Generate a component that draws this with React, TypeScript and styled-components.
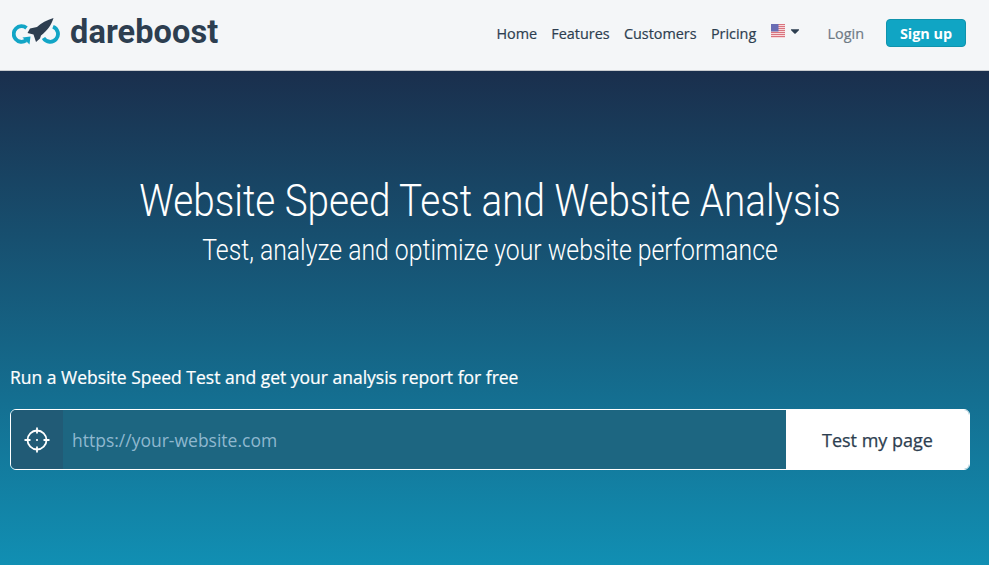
import React from 'react'
import styled, { createGlobalStyle } from 'styled-components'
import { FaCaretDown } from 'react-icons/fa'

const GlobalStyle = createGlobalStyle`
  html, body {
    margin: 0;
    padding: 0;
    background: #118fb3;
    font-family: "Open Sans", "Liberation Sans", sans-serif;
  }
  * { box-sizing: border-box; }
`

const Page = styled.div`
  width: 989px;
  height: 565px;
  overflow: hidden;
`

const Header = styled.header`
  height: 71px;
  display: flex;
  align-items: center;
  justify-content: space-between;
  padding: 0 23px 8px 12px;
  background: #f4f6f8;
  border-bottom: 1px solid #c9cccf;
`

const Brand = styled.a`
  display: flex;
  align-items: center;
  gap: 10px;
  margin-top: 2px;
`

const BrandName = styled.span`
  font-family: "Roboto", "Liberation Sans", sans-serif;
  font-size: 32.5px;
  font-weight: 700;
  line-height: 36px;
  letter-spacing: 0.1px;
  color: #2d3e50;
`

const Nav = styled.nav`
  display: flex;
  align-items: center;
  margin-top: 4px;
`

const NavLink = styled.a<{ $muted?: boolean }>`
  padding-top: 1px;
  font-size: 14.4px;
  font-weight: 400;
  line-height: 20px;
  -webkit-text-stroke: 0.2px currentColor;
  margin-right: ${(p) => (p.$muted ? '22px' : '14.3px')};
  color: ${(p) => (p.$muted ? '#6f7a85' : '#2d3e50')};
`

const LangPicker = styled.div`
  display: flex;
  align-items: center;
  gap: 3px;
  margin: -4px 26px 0 0;
  color: #2d3e50;
`

const SignUp = styled.button`
  width: 80px;
  height: 28px;
  padding: 0;
  border: 1px solid #0f93ad;
  border-radius: 4px;
  background: #10a5c4;
  color: #fff;
  font-family: inherit;
  font-size: 14.4px;
  font-weight: 700;
`

const Hero = styled.main`
  height: 494px;
  padding: 107px 19px 0 10px;
  background: linear-gradient(180deg, #1a2f4d 0%, #118fb3 100%);
`

const Title = styled.h1`
  margin: 0;
  text-align: center;
  font-family: "Roboto", "Liberation Sans", sans-serif;
  font-size: 45px;
  font-weight: 300;
  line-height: 46px;
  color: #fff;
  transform: scaleX(0.858);
`

const Subtitle = styled.h2`
  margin: 7px 0 0;
  text-align: center;
  font-family: "Roboto", "Liberation Sans", sans-serif;
  font-size: 28.8px;
  font-weight: 300;
  line-height: 38px;
  color: #fff;
  transform: scaleX(0.86);
`

const FormLabel = styled.label`
  display: block;
  margin-top: 96px;
  font-size: 17.5px;
  font-weight: 400;
  line-height: 24px;
  -webkit-text-stroke: 0.2px currentColor;
  color: #fff;
`

const TestForm = styled.form`
  display: flex;
  height: 61px;
  margin-top: 20px;
  width: 960px;
  border: 1px solid #fff;
  border-radius: 6px;
  overflow: hidden;
`

const TargetBox = styled.span`
  flex: none;
  width: 52px;
  display: flex;
  align-items: center;
  justify-content: center;
  background: #215b76;
  color: #fff;
`

const UrlInput = styled.input`
  flex: 1;
  min-width: 0;
  padding: 0 9px;
  border: 0;
  outline: 0;
  background: #1d6681;
  color: #fff;
  font-family: inherit;
  font-size: 17.5px;
  &::placeholder {
    color: #8fb8cf;
    opacity: 1;
  }
`

const SubmitButton = styled.button`
  flex: none;
  width: 183px;
  padding: 0;
  border: 0;
  background: #fff;
  color: #2d3e50;
  font-family: inherit;
  font-size: 18px;
  font-weight: 400;
  -webkit-text-stroke: 0.25px currentColor;
`

function LogoMark() {
  return (
    <svg width="48" height="30" viewBox="0 0 48 30" fill="none">
      <path d="M14.5 11 A7.8 7.8 0 1 0 14 23.4" stroke="#12a5c6" strokeWidth="3.8" />
      <path d="M10.5 20.5 L18.5 19.5 L17.5 27.5 Z" fill="#12a5c6" />
      <path d="M31.5 21 A7.8 7.8 0 1 0 41 9.7" stroke="#12a5c6" strokeWidth="3.8" />
      <path
        d="M41.5 1 C35 3 29 6 25 10 L18 11.5 L15.5 16 L21.5 17.5 L24 25 L28 21.5 L29 18.5 C35 14 39.5 8 41.5 1 Z"
        fill="#2d3e50"
      />
    </svg>
  )
}

function UsFlag() {
  return (
    <svg width="14" height="14" viewBox="0 0 14 14">
      <rect width="14" height="14" fill="#fbe4e6" />
      {[0, 2, 4, 6, 8, 10, 12].map((y) => (
        <rect key={y} y={y} width="14" height="1.1" fill="#d9747f" />
      ))}
      <rect width="7.5" height="7.5" fill="#6a6db4" />
    </svg>
  )
}

function TargetIcon() {
  return (
    <svg width="26" height="26" viewBox="0 0 26 26" fill="none" stroke="#fff">
      <circle cx="13" cy="13" r="9.5" strokeWidth="1.8" />
      <path d="M13 0.5 v6 M13 19.5 v6 M0.5 13 h6 M19.5 13 h6" strokeWidth="1.8" />
      <circle cx="13" cy="13" r="1.1" fill="#fff" stroke="none" />
    </svg>
  )
}

export default function App() {
  return (
    <Page>
      <GlobalStyle />
      <Header>
        <Brand>
          <LogoMark />
          <BrandName>dareboost</BrandName>
        </Brand>
        <Nav>
          <NavLink>Home</NavLink>
          <NavLink>Features</NavLink>
          <NavLink>Customers</NavLink>
          <NavLink>Pricing</NavLink>
          <LangPicker>
            <UsFlag />
            <FaCaretDown size={14} />
          </LangPicker>
          <NavLink $muted>Login</NavLink>
          <SignUp>Sign up</SignUp>
        </Nav>
      </Header>
      <Hero>
        <Title>Website Speed Test and Website Analysis</Title>
        <Subtitle>Test, analyze and optimize your website performance</Subtitle>
        <FormLabel>Run a Website Speed Test and get your analysis report for free</FormLabel>
        <TestForm onSubmit={(event) => event.preventDefault()}>
          <TargetBox>
            <TargetIcon />
          </TargetBox>
          <UrlInput type="text" placeholder="https://your-website.com" />
          <SubmitButton>Test my page</SubmitButton>
        </TestForm>
      </Hero>
    </Page>
  )
}
